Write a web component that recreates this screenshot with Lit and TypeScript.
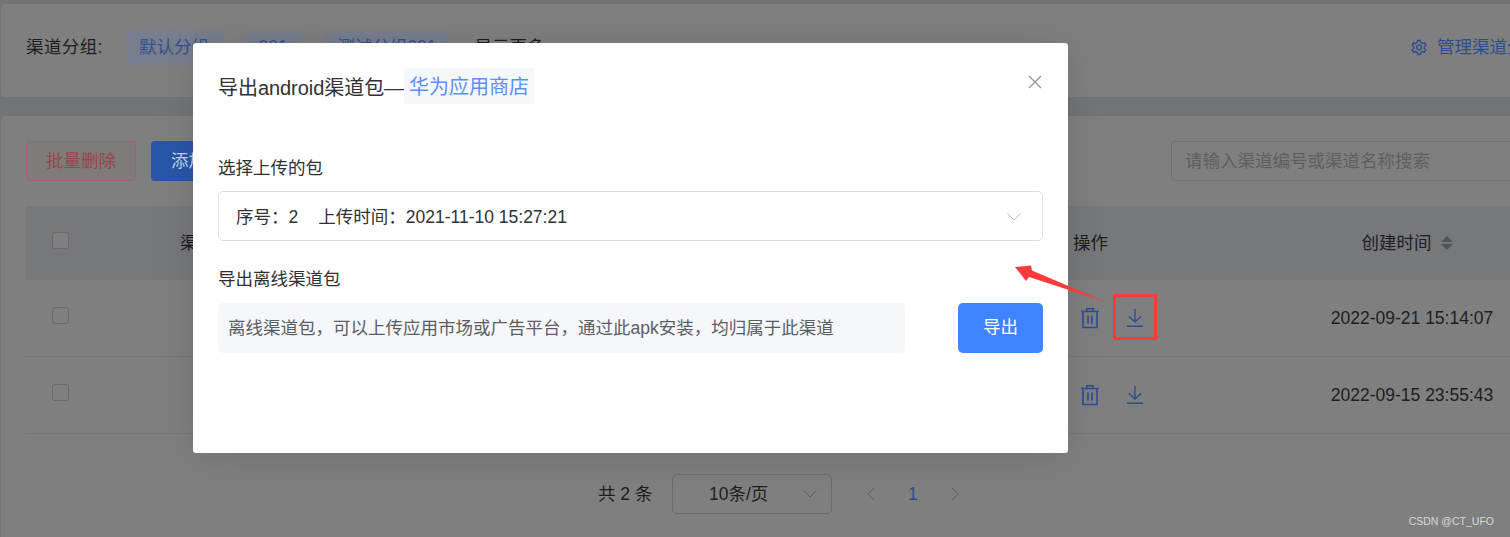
import { LitElement, html, css, svg } from "lit";
import { customElement } from "lit/decorators.js";

const COLON = "\uFF1A";
const COMMA = "\uFF0C";

const trash = svg`<svg class="ico" width="20" height="22" viewBox="0 0 20 22" fill="none" stroke="#2c4d96" stroke-width="1.6"><path d="M1 4.500h18M6.800 4.500V1.800h6.400v2.700M3 4.500v16h14v-16M8 8.500v8M12 8.500v8"/></svg>`;
const download = svg`<svg class="ico" width="18" height="20" viewBox="0 0 18 20" fill="none" stroke="#2c4d96" stroke-width="1.4"><path d="M9 1v13M2.800 8.200 9 14l6.200-5.800M1 18.300h16"/></svg>`;
const chevron = (c: string) => svg`<svg width="16" height="10" viewBox="0 0 16 10" fill="none" stroke="${c}" stroke-width="1"><path d="M1.500 1.500 8 8l6.500-6.500"/></svg>`;

@customElement("app-root")
export class AppRoot extends LitElement {
  static styles = css`
    :host { display: block; width: 1510px; height: 537px; position: relative; overflow: hidden; background: #737476; font-family: "Liberation Sans", "Noto Sans CJK SC", sans-serif; font-size: 17.5px; line-height: 20px; color: #1d1e20; }
    * { box-sizing: border-box; }
    .main { width: 1570px; padding: 4px 0 0 1px; display: flex; flex-direction: column; gap: 19px; }
    .card { background: #7f7f7f; border-radius: 4px; }
    .top { height: 93px; display: flex; align-items: center; padding: 0 28px 7px 25px; }
    .tag { height: 35px; padding: 0 13px; margin-right: 23.5px; display: flex; align-items: center; background: #787e8d; color: #33508f; border-radius: 6px; white-space: nowrap; }
    .tags-label { width: 100px; white-space: nowrap; letter-spacing: .4px; }
    .more { margin-left: 1.5px; white-space: nowrap; }
    .manage { margin-left: auto; display: flex; align-items: center; gap: 10px; color: #2c4d96; white-space: nowrap; }
    .list { padding: 25px 25px 0 25px; height: 430px; }
    .toolbar { height: 40px; display: flex; gap: 15px; margin-bottom: 25px; }
    .btn { height: 40px; display: flex; align-items: center; justify-content: center; border-radius: 4px; padding-bottom: 1px; }
    .danger { width: 110px; border: 1px solid #a56167; color: #96464a; background: #807b7b; }
    .primary { width: 110px; background: #2856a8; color: #c5d2e6; }
    .search { margin-left: auto; width: 374px; height: 40px; border: 1px solid #6e7078; border-radius: 4px; display: flex; align-items: center; padding: 0 14px 1px 13px; color: #5e5e60; }
    .row { display: grid; grid-template-columns: 130px 917px 237px 204px 1fr; border-bottom: 1px solid #75767a; }
    .row > div { display: flex; align-items: center; }
    .head { height: 74px; background: #77787b; border-bottom: 0; }
    .body { height: 77px; }
    .body:last-of-type { height: 76px; }
    .check { width: 17px; height: 17px; border: 1px solid #696a6e; border-radius: 3px; margin: 0 0 6px 26px; background: #7f7f7f; }
    .name { padding-left: 24px; }
    .center { justify-content: center; }
    .head .time { padding: 0 10px 0 0; gap: 9px; justify-content: center; }
    .ops { padding-left: 7px; gap: 26px; }
    .ico { display: block; flex: none; }
    .pager { display: flex; align-items: center; padding: 40px 0 0 572px; }
    .total { width: 74px; white-space: nowrap; }
    .size { width: 160px; height: 40px; border: 1px solid #6c6d72; border-radius: 5px; display: flex; align-items: center; justify-content: space-between; padding: 0 13px 0 36px; }
    .pg { margin-left: 34px; display: flex; align-items: center; gap: 32px; color: #2c4d96; }
    .sort { display: flex; flex-direction: column; gap: 2px; }
    .arr { display: block; width: 0; height: 0; border: 6px solid transparent; border-top-width: 0; border-bottom: 6px solid #515256; }
    .arr.down { border-bottom-width: 0; border-top: 6px solid #515256; border-bottom-color: transparent; }

    .modal { position: absolute; left: 193px; top: 43px; width: 875px; height: 410px; background: #fff; border-radius: 3px; padding: 25px; box-shadow: 0 4px 40px rgba(0,0,0,.12); color: #303133; }
    .title { height: 36px; display: flex; align-items: center; font-size: 20px; letter-spacing: -.05px; }
    .tt { padding-top: 3px; }
    .hl { height: 36px; padding: 2px 5px 0; display: flex; align-items: center; font-size: 20px; letter-spacing: 0; background: #f5f8fb; color: #5d8ffa; border-radius: 2px; }
    .close { position: absolute; right: 26px; top: 32px; display: block; }
    .label { height: 24px; display: flex; align-items: center; margin-top: 52px; font-size: 17.5px; }
    .label.second { margin-top: 26px; }
    .select { height: 50px; margin-top: 11px; padding: 1px 20px 0 17px; border: 1px solid #dcdfe6; border-radius: 5px; display: flex; align-items: center; justify-content: space-between; }
    .export { display: flex; justify-content: space-between; margin-top: 12px; }
    .desc { width: 687px; height: 50px; background: #f5f7fa; border-radius: 5px; display: flex; align-items: center; padding: 0 0 1px 10px; color: #5a5d63; font-size: 17.5px; white-space: nowrap; }
    .go { width: 85px; height: 50px; padding-bottom: 3px; background: #3e84ff; color: #fff; border-radius: 5px; display: flex; align-items: center; justify-content: center; }
    .sp { display: inline-block; width: 20px; }

    .mark { position: absolute; left: 0; top: 0; pointer-events: none; display: block; }
    .focus { position: absolute; left: 1113px; top: 294px; width: 44px; height: 46px; border: 3px solid #fb3b3b; }
    .wm { position: absolute; right: 16px; top: 514px; font-size: 10.5px; line-height: 14px; color: #d7d7d7; white-space: nowrap; }
  `;

  private row(time: string) {
    return html`<div class="row body">
      <div><span class="check"></span></div>
      <div></div>
      <div class="ops">${trash}${download}</div>
      <div class="center">${time}</div>
      <div></div>
    </div>`;
  }

  render() {
    return html`
      <div class="main">
        <section class="card top">
          <span class="tags-label">渠道分组:</span>
          <span class="tag">默认分组</span>
          <span class="tag">001</span>
          <span class="tag">测试分组001</span>
          <span class="more">显示更多</span>
          <span class="manage">
            <svg width="16" height="17" viewBox="0 0 24 24" fill="none" stroke="#2c4d96" stroke-width="2"><circle cx="12" cy="12" r="3.600"/><path d="M10 1.500h4l.8 3.200 2.200 1.200 3.200-.9 2 3.500-2.400 2.300v2.400l2.400 2.300-2 3.500-3.200-.9-2.200 1.200-.8 3.200h-4l-.8-3.200-2.200-1.200-3.200.9-2-3.500 2.400-2.300v-2.400L1.800 8.500l2-3.500 3.200.9 2.200-1.200z"/></svg>
            管理渠道分组
          </span>
        </section>
        <section class="card list">
          <div class="toolbar">
            <div class="btn danger">批量删除</div>
            <div class="btn primary">添加渠道</div>
            <div class="search">请输入渠道编号或渠道名称搜索</div>
          </div>
          <div class="row head">
            <div><span class="check"></span></div>
            <div class="name">渠道名称</div>
            <div class="op">操作</div>
            <div class="time">创建时间
              <span class="sort"><i class="arr"></i><i class="arr down"></i></span>
            </div>
            <div></div>
          </div>
          ${this.row("2022-09-21 15:14:07")}
          ${this.row("2022-09-15 23:55:43")}
          <div class="pager">
            <span class="total">共 2 条</span>
            <div class="size">10条/页 ${chevron("#5e5f63")}</div>
            <div class="pg">
              <svg width="10" height="14" viewBox="0 0 10 14" fill="none" stroke="#5e5f63"><path d="M8 1 2 7l6 6"/></svg>
              <span>1</span>
              <svg width="10" height="14" viewBox="0 0 10 14" fill="none" stroke="#5e5f63"><path d="m2 1 6 6-6 6"/></svg>
            </div>
          </div>
        </section>
      </div>

      <div class="modal">
        <div class="title"><span class="tt">导出android渠道包—</span><span class="hl">华为应用商店</span></div>
        <svg class="close" width="14" height="14" viewBox="0 0 14 14" fill="none" stroke="#8f9196" stroke-width="1.2"><path d="m1 1 12 12M13 1 1 13"/></svg>
        <div class="label">选择上传的包</div>
        <div class="select"><span>序号${COLON}2<span class="sp"></span>上传时间${COLON}2021-11-10 15:27:21</span>${chevron("#b8bac0")}</div>
        <div class="label second">导出离线渠道包</div>
        <div class="export">
          <div class="desc">离线渠道包${COMMA}可以上传应用市场或广告平台${COMMA}通过此apk安装${COMMA}均归属于此渠道</div>
          <div class="go">导出</div>
        </div>
      </div>

      <svg class="mark" width="1510" height="537" viewBox="0 0 1510 537"><polygon fill="#fb3b3b" points="1015,267 1031,265.500 1032,270.500 1106,302 1029,277 1026,281"/></svg>
      <div class="focus"></div>
      <div class="wm">CSDN @CT_UFO</div>
    `;
  }
}
